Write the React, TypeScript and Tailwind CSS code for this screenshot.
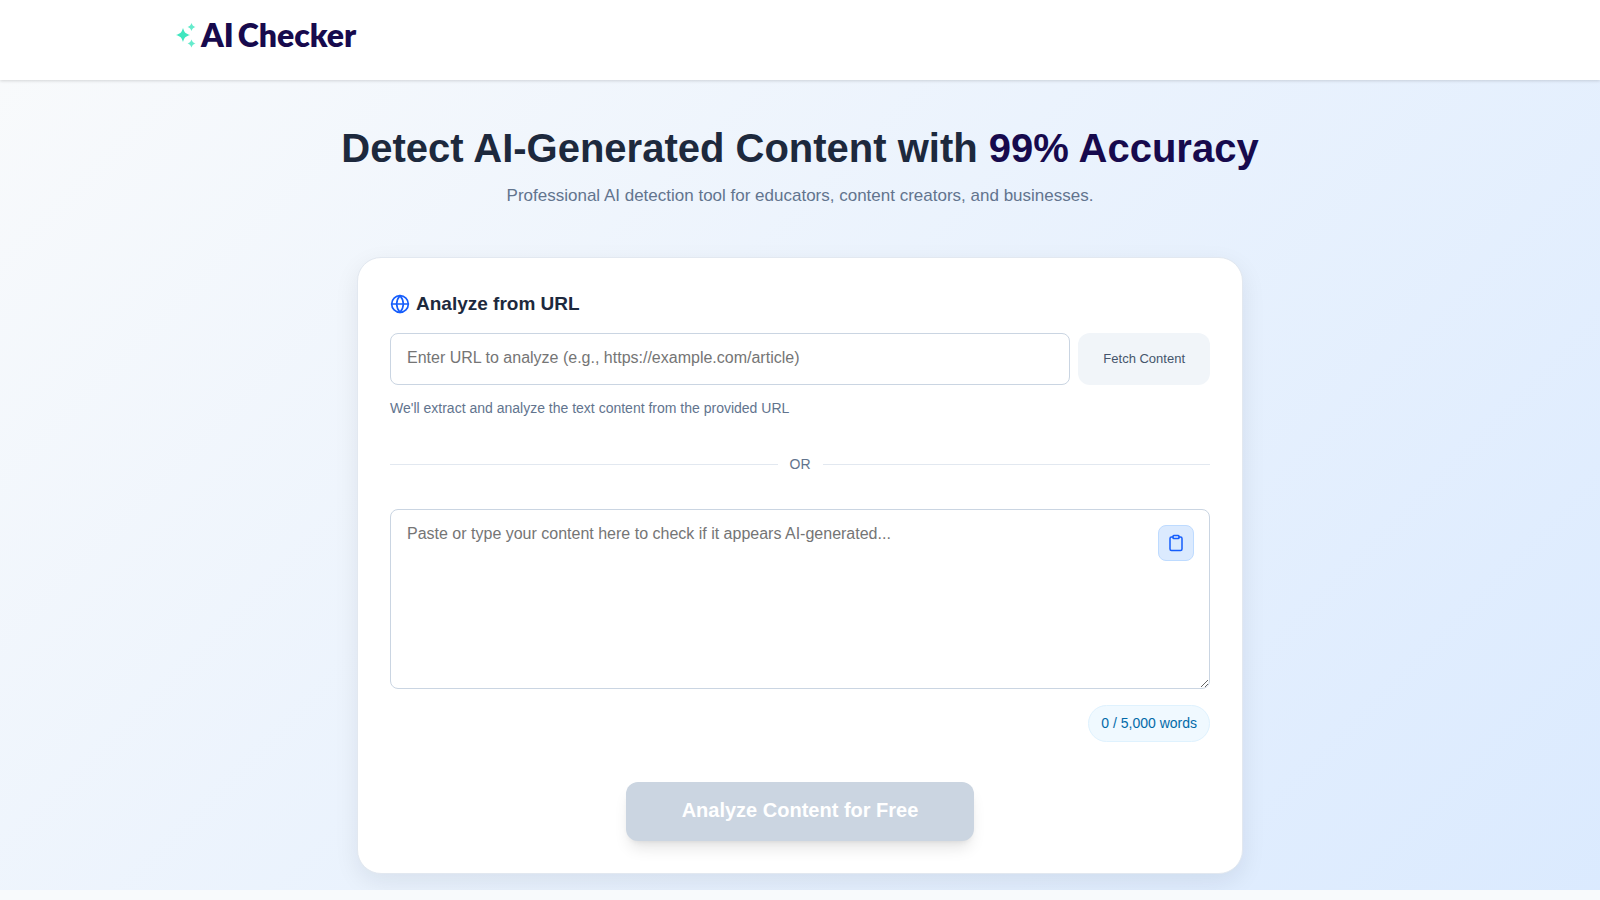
import React, { useState } from 'react';
import { Clipboard } from 'lucide-react';

const WORD_LIMIT = 5000;

const countWords = (text: string) => text.trim().split(/\s+/).filter(Boolean).length;

export default function App() {
  return (
    <div className="min-h-screen bg-slate-50 font-['Liberation_Sans',Arial,sans-serif] text-slate-800">
      <Header />
      <main className="overflow-hidden bg-linear-135 from-slate-50 to-blue-100 px-4 pt-[42px] pb-4">
        <Hero />
        <AnalyzerCard />
      </main>
    </div>
  );
}

const Header: React.FC = () => (
  <header className="relative h-20 bg-white shadow-[0_1px_3px_rgba(0,0,0,0.15)]">
    <div className="mx-auto max-w-7xl px-4 pt-[15px]">
      <a href="/" className="flex w-fit items-center gap-1 text-[#170a4d]">
        <Sparkles />
        <span className="flex gap-1 font-[Lato,sans-serif] text-[32px] leading-10 font-extrabold">
          <span>AI</span>
          <span>Checker</span>
        </span>
      </a>
    </div>
  </header>
);

// Three four-pointed stars to the left of the wordmark
const Sparkles: React.FC = () => (
  <svg width="21" height="26" viewBox="0 0 21 26" fill="#3fe6bf" aria-hidden="true">
    <path d="M7 6C8.8 11 9 11.2 14 13C9 14.8 8.8 15 7 20C5.2 15 5 14.8 0 13C5 11.2 5.2 11 7 6Z" />
    <path opacity=".8" d="M15.5 1C16.8 3.9 17 4 19.5 5C17 6.1 16.8 6.2 15.5 9C14.2 6.2 14 6.1 11.5 5C14 4 14.2 3.9 15.5 1Z" />
    <path opacity=".8" d="M15.5 17.5C16.8 20.4 17 20.5 19.5 21.5C17 22.6 16.8 22.7 15.5 25.5C14.2 22.7 14 22.6 11.5 21.5C14 20.5 14.2 20.4 15.5 17.5Z" />
  </svg>
);

const GlobeIcon: React.FC = () => (
  <svg
    className="size-5 text-blue-600"
    viewBox="0 0 24 24"
    fill="none"
    stroke="currentColor"
    strokeWidth="2"
    strokeLinecap="round"
    strokeLinejoin="round"
    aria-hidden="true"
  >
    <circle cx="12" cy="12" r="10" />
    <path d="M2 12h20" />
    <path d="M12 2a15.3 15.3 0 0 1 4 10 15.3 15.3 0 0 1-4 10 15.3 15.3 0 0 1-4-10 15.3 15.3 0 0 1 4-10z" />
  </svg>
);

const Hero: React.FC = () => (
  <div className="mb-[47px] text-center">
    <h1 className="mb-2 text-[40px] leading-13 font-bold">
      Detect AI-Generated Content with <span className="text-[#170a4d]">99% Accuracy</span>
    </h1>
    <p className="text-[17px] leading-7 text-slate-500">
      Professional AI detection tool for educators, content creators, and businesses.
    </p>
  </div>
);

const AnalyzerCard: React.FC = () => {
  const [url, setUrl] = useState('');
  const [content, setContent] = useState('');
  const words = countWords(content);

  const handlePaste = async () => {
    try {
      setContent(await navigator.clipboard.readText());
    } catch (err) {
      console.error('Could not read the clipboard:', err);
    }
  };

  return (
    <section className="mx-auto max-w-[886px] rounded-3xl border border-slate-200 bg-white p-8 shadow-[0_8px_25px_rgba(15,23,42,0.08)]">
      <label htmlFor="url" className="mb-[15px] flex items-center gap-1.5 text-[19px] leading-7 font-bold">
        <GlobeIcon />
        Analyze from URL
      </label>
      <div className="flex gap-2">
        <input
          id="url"
          type="url"
          value={url}
          onChange={(e) => setUrl(e.target.value)}
          placeholder="Enter URL to analyze (e.g., https://example.com/article)"
          className="h-13 min-w-0 flex-1 rounded-lg border border-slate-300 px-4 pb-0.5 text-base placeholder:text-[#757575]"
        />
        <button type="button" className="rounded-xl bg-slate-100 px-[25px] text-[13px] text-slate-600">
          Fetch Content
        </button>
      </div>
      <p className="mt-3 text-sm leading-[22px] text-slate-500">We'll extract and analyze the text content from the provided URL</p>

      <div className="my-8 flex items-center gap-3 text-sm leading-[26px] text-slate-500">
        <div className="h-px flex-1 bg-slate-200" />
        OR
        <div className="h-px flex-1 bg-slate-200" />
      </div>

      <div className="relative">
        <textarea
          aria-label="Content to check"
          value={content}
          onChange={(e) => setContent(e.target.value)}
          placeholder="Paste or type your content here to check if it appears AI-generated..."
          className="block h-[180px] w-full resize-y rounded-lg border border-slate-300 py-3 pr-16 pl-4 text-base placeholder:text-[#757575]"
        />
        <button
          type="button"
          aria-label="Paste from clipboard"
          onClick={handlePaste}
          className="absolute top-4 right-4 flex size-9 items-center justify-center rounded-lg border border-blue-200 bg-blue-100 text-blue-600"
        >
          <Clipboard className="size-[18px]" />
        </button>
      </div>

      <div className="mt-4 flex justify-end">
        <span className="rounded-full border border-sky-100 bg-sky-50 px-3 pt-[5px] pb-1.5 text-sm leading-6 text-sky-700">
          {words} / {WORD_LIMIT.toLocaleString('en-US')} words
        </span>
      </div>

      <div className="mt-10 flex justify-center">
        <button
          type="button"
          disabled={words === 0}
          className="rounded-xl bg-[#cbd5e1] px-14 pt-3 pb-[15px] text-xl leading-8 font-bold text-white shadow-lg"
        >
          Analyze Content for Free
        </button>
      </div>
    </section>
  );
};
